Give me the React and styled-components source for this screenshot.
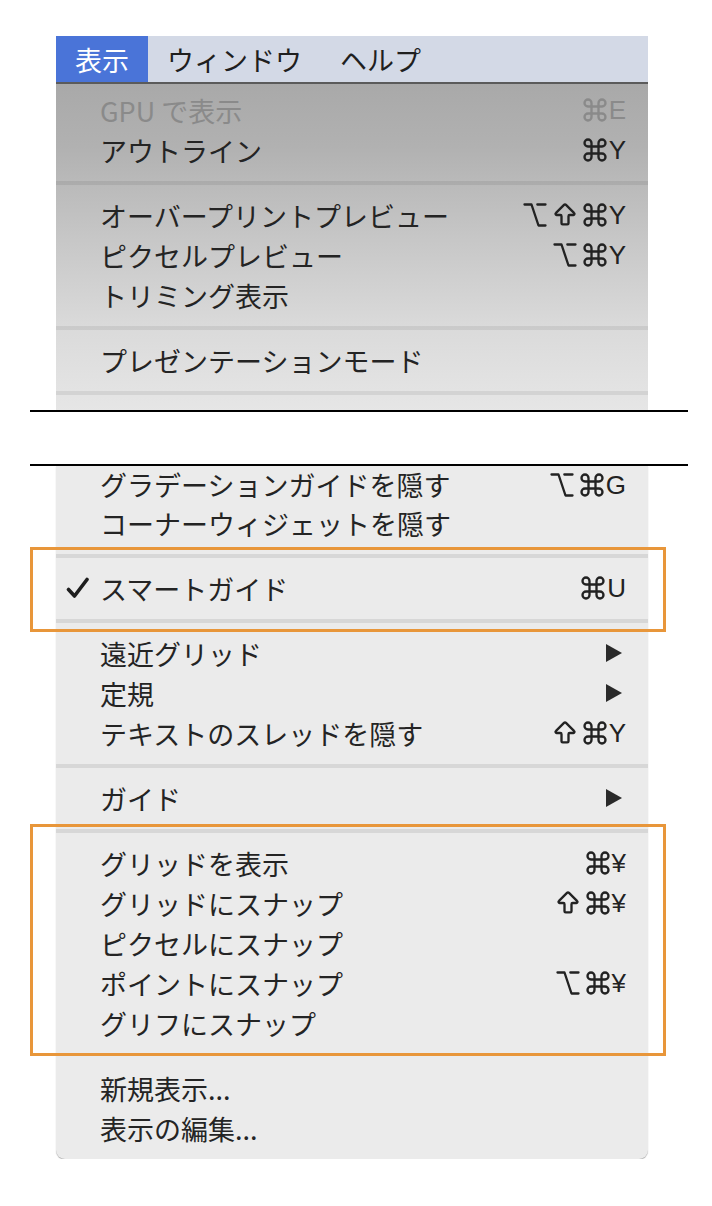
import React from "react";
import styled, { createGlobalStyle } from "styled-components";
import { Command, Option, ArrowBigUp } from "lucide-react";

const Global = createGlobalStyle`
  html, body { margin: 0; padding: 0; background: #ffffff; }
  body { font-family: "Noto Sans CJK JP", "Noto Sans", sans-serif; }
`;

const Page = styled.div`
  padding: 36px 0 0 30px;
  width: 658px;
`;

const Panel = styled.div`
  margin-left: 26px;
  width: 592px;
`;

const TopPanel = styled(Panel)`
  background: linear-gradient(
    to bottom,
    #d3d9e6 0px,
    #d3d9e6 46px,
    #a9a9a9 48px,
    #b1b1b1 110px,
    #c6c6c6 200px,
    #dadada 290px,
    #e6e6e6 375px
  );
`;

const MenuBar = styled.div`
  display: flex;
  height: 46px;
  background: #d3d9e6;
  border-bottom: 2px solid #5b5b5b;
`;

const BarItem = styled.div`
  display: flex;
  align-items: center;
  padding: 0 19px;
  font-size: 27px;
  line-height: 1;
  color: ${(p) => (p.$active ? "#ffffff" : "#1f1f1f")};
  background: ${(p) => (p.$active ? "#4a74d8" : "transparent")};
`;

const MenuBody = styled.div`
  padding-top: ${(p) => p.$pt || 0}px;
  padding-bottom: ${(p) => p.$pb || 0}px;
`;

const BottomPanel = styled(Panel)`
  background: #ebebeb;
  border-radius: 0 0 9px 9px;
  box-shadow: 0 1px 1px rgba(0, 0, 0, 0.3);
`;

const Row = styled.div`
  display: flex;
  align-items: center;
  height: ${(p) => p.$h || 40}px;
  padding: 0 22px 0 10px;
  font-size: 27px;
  line-height: 1;
  color: ${(p) => (p.$disabled ? "#8a8a8a" : "#242424")};
`;

const CheckSlot = styled.span`
  width: 34px;
  flex: none;
  display: flex;
  align-items: center;
`;

const Label = styled.span`
  white-space: nowrap;
`;

const Shortcut = styled.span`
  margin-left: auto;
  display: inline-flex;
  align-items: center;
  font-family: "Liberation Sans", "DejaVu Sans", sans-serif;
  font-size: 26px;
  line-height: 1;
  white-space: nowrap;
  color: ${(p) => (p.$disabled ? "#8a8a8a" : "#222222")};
`;

const KeyIcon = styled.span`
  display: inline-flex;
  width: 28px;
  height: 28px;
  margin-right: 2px;
  & > svg {
    width: 28px;
    height: 28px;
  }
`;

const Letter = styled.span`
  margin-left: -2px;
`;

const Arrow = styled.svg`
  margin-left: auto;
  margin-right: 3px;
  width: 18px;
  height: 20px;
  fill: #2a2a2a;
`;

const Separator = styled.div`
  height: 25px;
  display: flex;
  align-items: center;
  &::before {
    content: "";
    display: block;
    width: 100%;
    height: 4px;
    background: ${(p) => (p.$hidden ? "transparent" : p.$dark ? "rgba(0,0,0,0.07)" : "#d7d7d7")};
  }
`;

const Cut = styled.div`
  height: 52px;
  border-top: 2px solid #000;
  border-bottom: 2px solid #000;
  background: #ffffff;
`;

const Highlight = styled.div`
  position: relative;
  &::after {
    content: "";
    position: absolute;
    left: -26px;
    right: -18px;
    top: ${(p) => p.$top}px;
    bottom: ${(p) => p.$bottom}px;
    border: 3px solid #e8963a;
    pointer-events: none;
  }
`;

const CheckIcon = () => (
  <svg width="24" height="22" viewBox="0 0 24 22">
    <path
      d="M2.5 12.5 L8.5 19 L21 2.5"
      fill="none"
      stroke="#1e1e1e"
      strokeWidth="3.6"
      strokeLinecap="round"
      strokeLinejoin="round"
    />
  </svg>
);

const ICONS = { "⌘": Command, "⌥": Option, "⇧": ArrowBigUp };

const renderShortcut = (sc, disabled) => {
  if (!sc) return null;
  const chars = Array.from(sc);
  const last = chars.pop();
  const color = disabled ? "#8a8a8a" : "#222222";
  return (
    <Shortcut $disabled={disabled}>
      {chars.map((c, i) => {
        const Icon = ICONS[c];
        return (
          <KeyIcon key={i}>
            <Icon color={color} strokeWidth={2} />
          </KeyIcon>
        );
      })}
      <Letter>{last}</Letter>
    </Shortcut>
  );
};

const Item = ({ label, sc, sub, checked, disabled, h }) => (
  <Row $h={h} $disabled={disabled}>
    <CheckSlot>{checked ? <CheckIcon /> : null}</CheckSlot>
    <Label>{label}</Label>
    {sub ? (
      <Arrow viewBox="0 0 18 20">
        <polygon points="1,1 17,10 1,19" />
      </Arrow>
    ) : (
      renderShortcut(sc, disabled)
    )}
  </Row>
);

export default function App() {
  return (
    <>
      <Global />
      <Page>
        <TopPanel>
          <MenuBar>
            <BarItem $active>表示</BarItem>
            <BarItem>ウィンドウ</BarItem>
            <BarItem>ヘルプ</BarItem>
          </MenuBar>
          <MenuBody $pt={6} $pb={5}>
            <Item label="GPU で表示" sc="⌘E" disabled />
            <Item label="アウトライン" sc="⌘Y" />
            <Separator $dark />
            <Item label="オーバープリントプレビュー" sc="⌥⇧⌘Y" />
            <Item label="ピクセルプレビュー" sc="⌥⌘Y" />
            <Item label="トリミング表示" />
            <Separator $dark />
            <Item label="プレゼンテーションモード" />
            <Separator $dark />
          </MenuBody>
        </TopPanel>
        <Cut />
        <BottomPanel>
          <MenuBody $pb={11}>
            <Item label="グラデーションガイドを隠す" sc="⌥⌘G" h={37} />
            <Item label="コーナーウィジェットを隠す" />
            <Highlight $top={4} $bottom={1}>
              <Separator />
              <Item label="スマートガイド" sc="⌘U" checked />
              <Separator />
            </Highlight>
            <Item label="遠近グリッド" sub />
            <Item label="定規" sub />
            <Item label="テキストのスレッドを隠す" sc="⇧⌘Y" />
            <Separator />
            <Item label="ガイド" sub />
            <Highlight $top={6} $bottom={-13}>
              <Separator />
              <Item label="グリッドを表示" sc="⌘¥" />
              <Item label="グリッドにスナップ" sc="⇧⌘¥" />
              <Item label="ピクセルにスナップ" />
              <Item label="ポイントにスナップ" sc="⌥⌘¥" />
              <Item label="グリフにスナップ" />
            </Highlight>
            <Separator $hidden />
            <Item label="新規表示..." />
            <Item label="表示の編集..." />
          </MenuBody>
        </BottomPanel>
      </Page>
    </>
  );
}
